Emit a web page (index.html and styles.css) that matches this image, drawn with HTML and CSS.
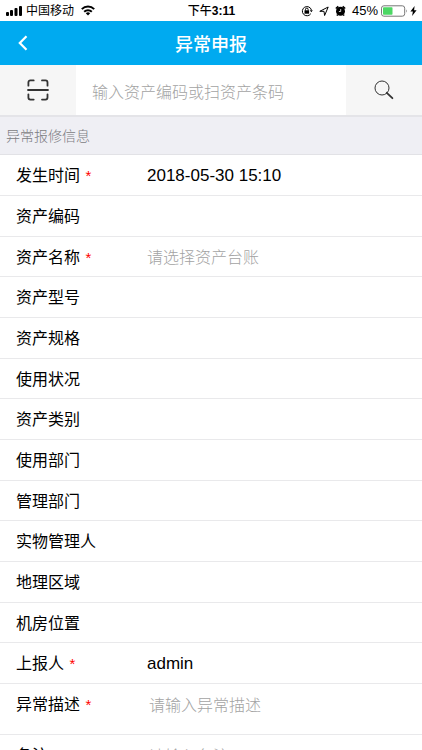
FILE: index.html
```html
<!DOCTYPE html>
<html lang="zh-CN">
<head>
  <meta charset="UTF-8" />
  <meta name="viewport" content="width=device-width, initial-scale=1.0"/>
  <title>异常申报</title>
  <link rel="stylesheet" href="styles.css">
</head>
<body>
  <div class="app">
    <div class="status-bar">
      <div class="status-left">
        <svg width="17" height="11" viewBox="0 0 17 11">
          <rect x="0" y="7" width="3" height="4" rx="1"/>
          <rect x="4" y="5" width="3" height="6" rx="1"/>
          <rect x="8.5" y="3" width="3" height="8" rx="1"/>
          <rect x="13" y="1" width="3" height="10" rx="1"/>
        </svg>
        <span>中国移动</span>
        <svg class="wifi" width="14" height="11" viewBox="0 0 14 11" fill="none" stroke="#000" stroke-width="2">
          <path d="M.8 4.1a8.8 8.8 0 0 1 12.4 0M3.2 6.7a5.4 5.4 0 0 1 7.6 0"/>
          <path d="M7 10.6 4.8 8.3a3.2 3.2 0 0 1 4.4 0z" fill="#000" stroke="none"/>
        </svg>
      </div>
      <div class="status-time">下午<b>3:11</b></div>
      <div class="status-right">
        <svg width="12" height="12" viewBox="0 0 12 12" fill="none" stroke="#000">
          <path d="M9.8 8.7A4.6 4.6 0 1 1 10.4 5"/>
          <path d="M8.8 5.2h3l-1.4 2z" fill="#000" stroke="none"/>
          <rect x="3.5" y="5.3" width="4.6" height="3.4" fill="#000" stroke="none"/>
          <path d="M4.5 5.5V4.4a1.3 1.3 0 0 1 2.6 0v1.1"/>
        </svg>
        <svg width="10" height="12" viewBox="0 0 10 12" fill="none" stroke="#000" stroke-linejoin="round">
          <path d="M.8 6.3 9.2 2 5.6 10.5 5 6.3z"/>
        </svg>
        <svg width="11" height="12" viewBox="0 0 11 12">
          <circle cx="5.5" cy="6.3" r="4.5"/>
          <path d="M.8 3.5 3.3 1.4M7.7 1.4l2.5 2.1M2.6 9.6l-.6 1M8.4 9.6l.6 1" stroke="#000" stroke-width="1.6"/>
          <path d="M5.7 4v2.5H3.9" fill="none" stroke="#fff" stroke-width=".8"/>
        </svg>
        <span class="percent">45%</span>
        <svg width="27" height="12" viewBox="0 0 27 12">
          <rect x=".5" y=".8" width="23.2" height="10.4" rx="2.4" fill="#fff" stroke="#777"/>
          <rect x="2" y="2.3" width="9.5" height="7.4" rx=".8" fill="#4cd764"/>
          <path d="M25 4.3q1.6 1.7 0 3.4z" fill="#777"/>
        </svg>
        <svg class="bolt" width="7" height="10" viewBox="0 0 7 10">
          <path d="M4.6 0 .4 5.6h2.5L2.1 10l4.5-5.8H4.1z"/>
        </svg>
      </div>
    </div>

    <header class="nav">
      <button class="back" type="button" aria-label="返回">
        <svg width="10" height="16" viewBox="0 0 10 16" fill="none" stroke="#fff" stroke-width="2.2">
          <path d="M8.5 1.2 1.8 8l6.7 6.8"/>
        </svg>
      </button>
      <h1>异常申报</h1>
    </header>

    <form class="search">
      <button class="scan" type="button" aria-label="扫码">
        <svg width="22" height="22" viewBox="0 0 22 22" fill="none" stroke="#333" stroke-width="1.8" stroke-linecap="round">
          <path d="M1.4 6.7V3.4a2 2 0 0 1 2-2h3.3M15 1.4h3.5a2 2 0 0 1 2 2v3.3M1.4 15.3v3.3a2 2 0 0 0 2 2h3.3M15 20.6h3.5a2 2 0 0 0 2-2v-3.3M1 11h20"/>
        </svg>
      </button>
      <input type="text" aria-label="资产编码" placeholder="输入资产编码或扫资产条码">
      <button class="find" type="submit" aria-label="搜索">
        <svg width="20" height="20" viewBox="0 0 20 20" fill="none" stroke="#333">
          <circle cx="8" cy="8" r="7"/>
          <path d="M12.8 12.8 18.4 18.2" stroke-width="1.8" stroke-linecap="round"/>
        </svg>
      </button>
    </form>

    <h2 class="section-title">异常报修信息</h2>

    <form class="fields">
      <div class="row"><label for="time">发生时间 <i>*</i></label><input id="time" type="text" value="2018-05-30 15:10"></div>
      <div class="row"><label for="code">资产编码</label><input id="code" type="text" readonly></div>
      <div class="row"><label for="name">资产名称 <i>*</i></label><input id="name" type="text" placeholder="请选择资产台账"></div>
      <div class="row"><label for="model">资产型号</label><input id="model" type="text" readonly></div>
      <div class="row"><label for="spec">资产规格</label><input id="spec" type="text" readonly></div>
      <div class="row"><label for="state">使用状况</label><input id="state" type="text" readonly></div>
      <div class="row"><label for="type">资产类别</label><input id="type" type="text" readonly></div>
      <div class="row"><label for="useDept">使用部门</label><input id="useDept" type="text" readonly></div>
      <div class="row"><label for="manageDept">管理部门</label><input id="manageDept" type="text" readonly></div>
      <div class="row"><label for="manager">实物管理人</label><input id="manager" type="text" readonly></div>
      <div class="row"><label for="area">地理区域</label><input id="area" type="text" readonly></div>
      <div class="row"><label for="room">机房位置</label><input id="room" type="text" readonly></div>
      <div class="row"><label for="reporter">上报人 <i>*</i></label><input id="reporter" type="text" value="admin"></div>
      <div class="row row-area"><label for="desc">异常描述 <i>*</i></label><textarea id="desc" rows="1" placeholder="请输入异常描述"></textarea></div>
      <div class="row row-area"><label for="remark">备注</label><textarea id="remark" rows="1" placeholder="请输入备注"></textarea></div>
    </form>
  </div>
</body>
</html>
```
FILE: styles.css
```css
* {
  box-sizing: border-box;
}

body {
  margin: 0;
  font-family: "Liberation Sans", "Noto Sans CJK SC", sans-serif;
  font-size: 16px;
  color: #000;
  background: #fff;
}

.app {
  height: 100vh;
  overflow-y: auto;
  scrollbar-width: none;
}

svg {
  display: block;
  flex: none;
}

button, input, textarea {
  margin: 0;
  padding: 0;
  border: none;
  border-radius: 0;
  outline: none;
  background: none;
  font-family: inherit;
  color: inherit;
}

/* status bar */
.status-bar {
  display: grid;
  grid-template-columns: 1fr auto 1fr;
  align-items: center;
  height: 21px;
  padding: 0 5px 0 6px;
  font-size: 12px;
  line-height: 20px;
}

.status-left, .status-right {
  display: flex;
  align-items: center;
  gap: 3px;
}

.status-left .wifi {
  margin-left: 4px;
}

.status-time {
  font-weight: 500;
}

.status-right {
  justify-content: flex-end;
  gap: 6px;
}

.status-right .percent {
  font-size: 13px;
}

.status-right .percent + svg {
  margin-left: -3px;
}

.status-right .bolt {
  margin-left: -4px;
}

/* nav */
.nav {
  display: grid;
  grid-template-columns: 1fr auto 1fr;
  align-items: center;
  height: 44px;
  background: #00aaf0;
  color: #fff;
}

.nav h1 {
  margin: 0;
  font-size: 18px;
  font-weight: 500;
}

.back {
  justify-self: start;
  padding: 14px 18px;
}

/* search */
.search {
  display: flex;
  height: 52px;
  border-bottom: 2px solid #e4e4e8;
}

.search input {
  flex: 1;
  min-width: 0;
  padding: 6px 16px 0;
  font-size: 16px;
}

.scan, .find {
  display: flex;
  align-items: center;
  justify-content: center;
  width: 76px;
  background: #f6f6f6;
}

::placeholder {
  color: #a3a3a3;
  font-weight: 300;
  opacity: 1;
}

.section-title {
  margin: 0;
  padding: 7px 6px 6px;
  font-size: 14px;
  line-height: 24px;
  font-weight: 300;
  color: #7c7c82;
  background: #efeff4;
  border-bottom: 1px solid #e2e2e6;
}

/* fields */
.row {
  display: flex;
  align-items: center;
  height: 41px;
  padding: 2px 16px 0;
  border-bottom: 1px solid #e9e9eb;
}

.row:nth-child(3n) {
  height: 40px;
}

.row label {
  width: 131px;
  flex: none;
  line-height: 24px;
}

.row label i {
  padding-left: 1px;
  font-size: 15px;
  font-style: normal;
  color: #f00;
}

.row input {
  flex: 1;
  min-width: 0;
  height: 24px;
  font-size: 17px;
}

.row input::placeholder {
  font-size: 16px;
}

.row.row-area {
  height: 51px;
  align-items: flex-start;
  padding-top: 9px;
}

.row textarea {
  flex: 1;
  min-width: 0;
  height: 28px;
  padding: 1px 2px;
  font-size: 16px;
  line-height: 24px;
  resize: none;
  overflow: hidden;
}
```
